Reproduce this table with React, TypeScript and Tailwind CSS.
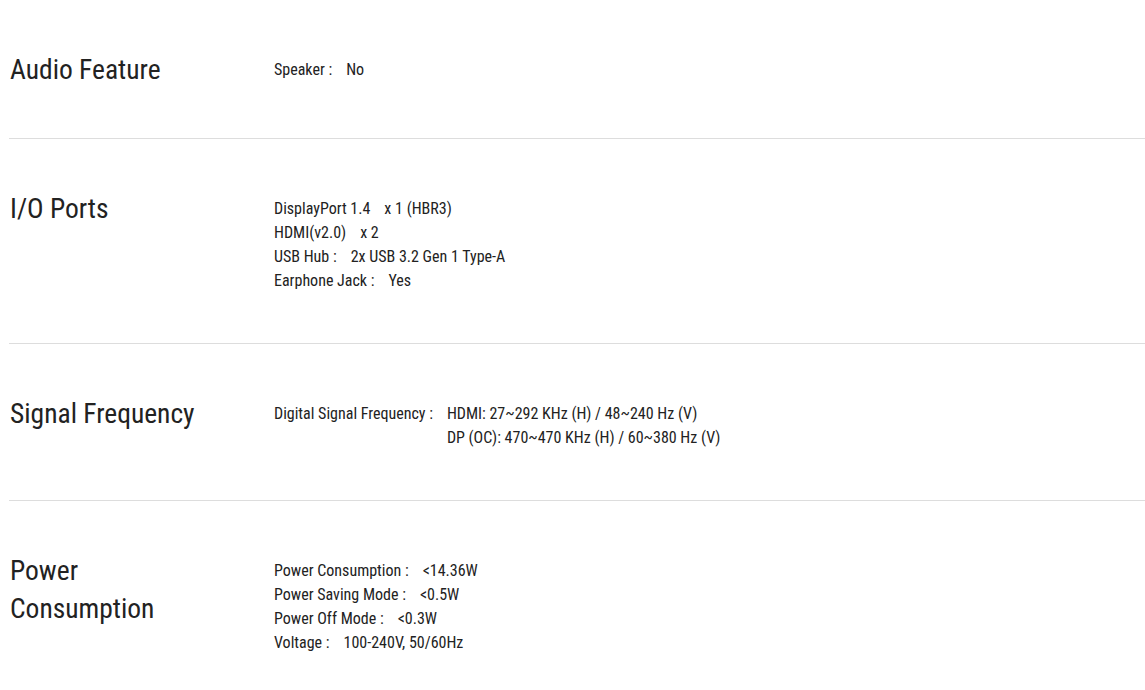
import React from "react";

function Row({ label, value }: { label: string; value?: string }) {
  return (
    <div className="leading-6 whitespace-pre">
      <span>{label}</span>
      {value !== undefined && <span className="ml-[14px]">{value}</span>}
    </div>
  );
}

export default function App() {
  return (
    <div className="bg-white w-[1145px] h-[690px] overflow-hidden text-[#222] [font-family:'Roboto_Condensed',Roboto,sans-serif]">
      <div className="pl-[9px]">
        <section className="flex border-b border-[#dddddd] pt-[53px] pb-[51px]">
          <h3 className="w-[265px] text-[27.5px] leading-[34px] pl-px">Audio Feature</h3>
          <div className="text-[16px] pt-[5px]">
            <Row label="Speaker :" value="No" />
          </div>
        </section>
        <section className="flex border-b border-[#dddddd] pt-[51px] pb-[50px]">
          <h3 className="w-[265px] text-[27.5px] leading-[34px] pl-px pt-[2px]">I/O Ports</h3>
          <div className="text-[16px] pt-[7px]">
            <Row label="DisplayPort 1.4" value="x 1 (HBR3)" />
            <Row label="HDMI(v2.0)" value="x 2" />
            <Row label="USB Hub :" value="2x USB 3.2 Gen 1 Type-A" />
            <Row label="Earphone Jack :" value="Yes" />
          </div>
        </section>
        <section className="flex border-b border-[#dddddd] pt-[51px] pb-[50px]">
          <h3 className="w-[265px] text-[27.5px] leading-[34px] pl-px pt-[2px]">Signal Frequency</h3>
          <div className="text-[16px] pt-[7px] flex">
            <div className="leading-6 whitespace-pre mr-[14px]">Digital Signal Frequency :</div>
            <div>
              <Row label="HDMI: 27~292 KHz (H) / 48~240 Hz (V)" />
              <Row label="DP (OC): 470~470 KHz (H) / 60~380 Hz (V)" />
            </div>
          </div>
        </section>
        <section className="flex pt-[51px] pb-[50px]">
          <h3 className="w-[265px] text-[27.5px] leading-[38px] pl-px">
            Power
            <br />
            Consumption
          </h3>
          <div className="text-[16px] pt-[7px]">
            <Row label="Power Consumption :" value="<14.36W" />
            <Row label="Power Saving Mode :" value="<0.5W" />
            <Row label="Power Off Mode :" value="<0.3W" />
            <Row label="Voltage :" value="100-240V, 50/60Hz" />
          </div>
        </section>
      </div>
    </div>
  );
}
